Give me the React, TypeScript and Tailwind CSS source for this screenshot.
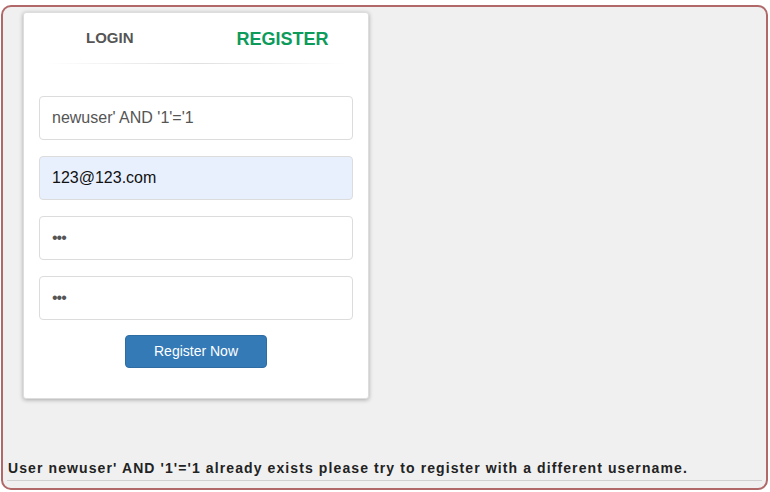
export default function App() {
  const font = { fontFamily: '"Liberation Sans", Arial, sans-serif' };
  return (
    <div className="h-[492px] w-[770px] bg-white pt-[5px] pl-px" style={font}>
      <div className="flex h-[485px] w-[767px] flex-col rounded-[10px] border-2 border-[#b06868] bg-[#f0f0f0] pl-[20px] pt-[5px]">
        <div className="w-[346px] rounded-[3px] border border-[#ddd] bg-white px-[15px] pb-[30px] shadow-[0_1px_4px_rgba(0,0,0,0.3)]">
          <div className="flex h-[50px] items-end pl-[47px]">
            <div className="pb-[14px] text-[15px] font-bold text-[#555]">LOGIN</div>
            <div className="ml-[103px] pb-[10px] text-[18px] font-bold text-[#0c9b5a]">REGISTER</div>
          </div>
          <div className="mx-[6px] h-px bg-gradient-to-r from-transparent via-[#e0e0e0] to-transparent" />
          <div className="mt-[32px] flex flex-col gap-[16px]">
            <div className="flex h-[44px] items-center rounded-[4px] border border-[#dcdcdc] px-[12px] text-[16px] text-[#555]">newuser' AND '1'='1</div>
            <div className="flex h-[44px] items-center rounded-[4px] border border-[#dcdcdc] bg-[#e8f0fe] px-[12px] text-[16px] text-[#111]">123@123.com</div>
            <div className="flex h-[44px] items-center rounded-[4px] border border-[#dcdcdc] px-[12px] text-[16px] tracking-[-1px] text-[#555]">•••</div>
            <div className="flex h-[44px] items-center rounded-[4px] border border-[#dcdcdc] px-[12px] text-[16px] tracking-[-1px] text-[#555]">•••</div>
          </div>
          <div className="mt-[15px] flex justify-center">
            <button className="h-[33px] w-[142px] rounded-[4px] border border-[#2e6da4] bg-[#337ab7] text-[14px] text-white">Register Now</button>
          </div>
        </div>
        <div className="mt-auto mb-[7px] mr-[4px] -ml-[16px] border-b border-[#d0d0d0] pb-[1px] pl-[1px] text-[14px] font-bold tracking-[1.1px] text-[#222]">
          User newuser' AND '1'='1 already exists please try to register with a different username.
        </div>
      </div>
    </div>
  );
}
